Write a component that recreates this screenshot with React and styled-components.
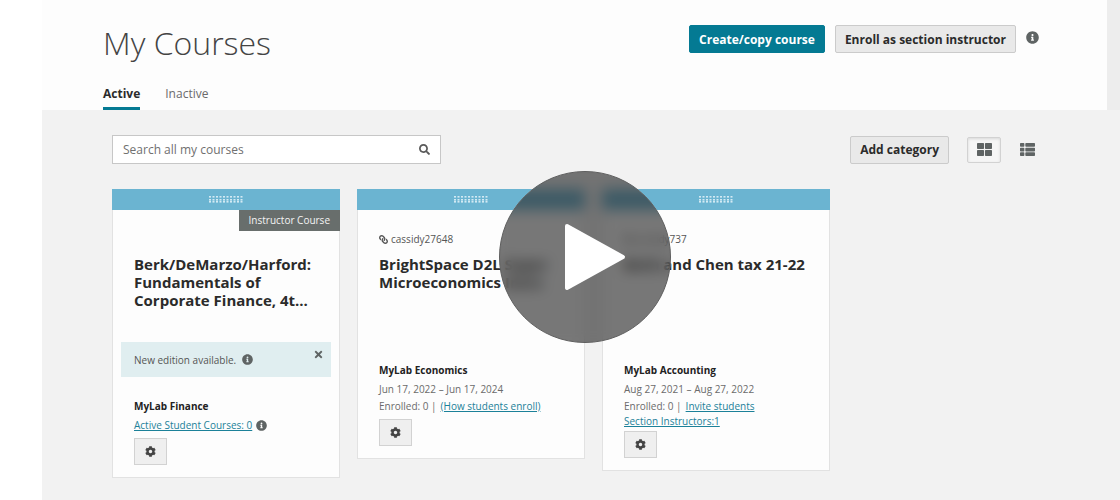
import React from 'react'
import styled, { createGlobalStyle, css } from 'styled-components'
import { FaCog, FaInfoCircle, FaLink, FaSearch, FaThLarge, FaThList, FaTimes } from 'react-icons/fa'

const colors = {
    teal: '#047a93',
    link: '#1c8199',
    bar: '#6bb4d1',
    text: '#2b2b2b',
    muted: '#6b6b6b',
    border: '#d2d2d2',
    page: '#f2f2f2',
    surface: '#fdfdfd'
}

const GlobalStyle = createGlobalStyle`
    * {
        box-sizing: border-box;
    }
    html, body {
        height: 100%;
    }
    #root {
        display: flex;
        height: 100%;
    }
    body {
        margin: 0;
        overflow: hidden;
        background: #fff;
        color: ${colors.text};
        font-family: 'Open Sans', 'Noto Sans', sans-serif;
        font-size: 10px;
    }
    button, input {
        font-family: inherit;
    }
`

const StyledPage = styled.div`
    flex: 1;
    position: relative;
    margin-left: 42px;
    background: ${colors.page};
`

const StyledHeader = styled.header`
    display: flex;
    justify-content: space-between;
    align-items: flex-start;
    margin-right: 13px;
    padding: 18px 68px 0 61px;
    background: ${colors.surface};
    box-shadow: 13px 0 0 #ededed;
`

const StyledTitle = styled.h1`
    margin: 0;
    font-size: 32px;
    font-weight: 300;
    line-height: 50px;
    color: #444;
`

const StyledTabs = styled.nav`
    display: flex;
    gap: 25px;
    margin-top: 16px;
`

const StyledTab = styled.a`
    height: 26px;
    font-size: 12px;
    line-height: 20px;
    text-decoration: none;
    color: ${colors.muted};
    ${({ $active }) => $active && css`
        font-weight: 700;
        color: ${colors.text};
        border-bottom: 3px solid ${colors.teal};
    `}
`

const StyledActions = styled.div`
    display: flex;
    align-items: flex-start;
    gap: 10px;
    padding-top: 7px;
`

const StyledButton = styled.button`
    height: 28px;
    padding: 0 9px;
    border: 1px solid ${({ $primary }) => $primary ? colors.teal : '#cbcbcb'};
    border-radius: 2px;
    background: ${({ $primary }) => $primary ? colors.teal : '#e9e9e9'};
    color: ${({ $primary }) => $primary ? '#fff' : colors.text};
    font-size: 12px;
    font-weight: 700;
    white-space: nowrap;
`

const StyledIconButton = styled.button`
    display: inline-flex;
    align-items: center;
    justify-content: center;
    padding: 0;
    border: 0;
    background: none;
    color: #5f6464;
`

const StyledHelp = styled.div`
    display: flex;
    align-items: center;
    height: 24px;
`

const StyledToolbar = styled.div`
    display: flex;
    align-items: center;
    justify-content: space-between;
    padding: 25px 85px 0 70px;
`

const StyledSearch = styled.label`
    display: flex;
    align-items: center;
    width: 329px;
    height: 29px;
    padding: 0 10px;
    border: 1px solid #c7c7c7;
    background: #fff;
    color: #5a5a5a;
`

const StyledInput = styled.input`
    flex: 1;
    padding: 0;
    border: 0;
    outline: 0;
    background: none;
    font-size: 12px;
    &::placeholder {
        color: #707070;
        opacity: 1;
    }
`

const StyledTools = styled.div`
    display: flex;
    align-items: center;
    gap: 18px;
`

const StyledView = styled(StyledIconButton)`
    width: ${({ $active }) => $active ? 34 : 16}px;
    height: 26px;
    ${({ $active }) => $active && css`
        border: 1px solid ${colors.border};
        border-radius: 2px;
        background: #f6f6f6;
        box-shadow: inset 0 1px 3px rgba(0, 0, 0, .12);
    `}
`

const StyledGrid = styled.main`
    display: grid;
    grid-template-columns: repeat(auto-fill, 228px);
    align-items: start;
    gap: 17px;
    padding: 25px 70px 22px;
`

const StyledCard = styled.article`
    position: relative;
`

const StyledBar = styled.div`
    display: flex;
    align-items: center;
    justify-content: center;
    height: 21px;
    background: ${colors.bar};
`

const StyledTag = styled.span`
    position: absolute;
    top: 21px;
    right: 0;
    padding: 0 10px;
    background: #686e6c;
    color: #f4f4f4;
    line-height: 21px;
`

const StyledBody = styled.div`
    padding: 21px 21px 12px;
    border: 1px solid #e2e2e2;
    border-top: 0;
    background: ${colors.surface};
`

const StyledId = styled.div`
    display: flex;
    align-items: center;
    gap: 3px;
    height: 16px;
    color: #555;
    svg {
        transform: scaleX(-1);
    }
`

const StyledName = styled.h2`
    min-height: 87px;
    margin: 8px 0 0;
    font-size: 15px;
    font-weight: 700;
    line-height: 18px;
    white-space: pre-line;
`

const StyledNotice = styled.div`
    display: flex;
    align-items: center;
    gap: 6px;
    height: 35px;
    margin: 0 -13px 21px;
    padding: 0 7px 0 13px;
    background: #e0eef0;
    color: #555;
`

const StyledClose = styled(StyledIconButton)`
    align-self: flex-start;
    margin: 7px 0 0 auto;
`

const StyledProduct = styled.h3`
    margin: 20px 0 3px;
    font-size: 10px;
    font-weight: 700;
    line-height: 16px;
    color: #222;
`

const StyledMeta = styled.div`
    display: flex;
    align-items: center;
    gap: 4px;
    line-height: ${({ $tight }) => $tight ? 12 : 17}px;
    white-space: nowrap;
    color: ${colors.muted};
`

const StyledLink = styled.a`
    color: ${colors.link};
    text-decoration: underline;
`

const StyledSettings = styled(StyledIconButton)`
    width: 33px;
    height: 27px;
    margin-top: 4px;
    border: 1px solid ${colors.border};
    background: #efefef;
    color: #444;
`

const StyledPlay = styled.button`
    position: absolute;
    top: 171px;
    left: 457px;
    width: 172px;
    height: 172px;
    padding: 0;
    border: 1px solid #5e5e5e;
    border-radius: 50%;
    background: rgba(30, 30, 30, .6);
    backdrop-filter: blur(7px);
`

const courses = [
    {
        name: 'Berk/DeMarzo/Harford: Fundamentals of Corporate Finance, 4t...',
        tag: 'Instructor Course',
        notice: 'New edition available.',
        product: 'MyLab Finance',
        students: 'Active Student Courses: 0'
    },
    {
        id: 'cassidy27648',
        name: 'BrightSpace D2L Super\nMicroeconomics Intro',
        product: 'MyLab Economics',
        dates: 'Jun 17, 2022 – Jun 17, 2024',
        enroll: '(How students enroll)'
    },
    {
        id: 'cassidy737',
        name: 'Beth and Chen tax 21-22',
        product: 'MyLab Accounting',
        dates: 'Aug 27, 2021 – Aug 27, 2022',
        enroll: 'Invite students',
        instructors: 'Section Instructors:1'
    }
]

const Info = ({ size = 11 }) => <StyledIconButton aria-label='More information'>
    <FaInfoCircle size={size} />
</StyledIconButton>

const Grip = () => <svg width='34' height='8' viewBox='0 0 34 8' fill='#d3eaf3'>
    {[0, 3, 5].map(y => Array.from({ length: 10 }, (_, i) => (
        <rect key={`${y}-${i}`} x={i * 3.5} y={y} width='2' height='1.6' />
    )))}
</svg>

const Course = (props) => <StyledCard>
    <StyledBar><Grip /></StyledBar>
    {props.tag && <StyledTag>{props.tag}</StyledTag>}
    <StyledBody>
        <StyledId>{props.id && <><FaLink size={9} />{props.id}</>}</StyledId>
        <StyledName>{props.name}</StyledName>
        {props.notice && <StyledNotice>
            {props.notice}
            <Info />
            <StyledClose aria-label='Dismiss'><FaTimes size={11} /></StyledClose>
        </StyledNotice>}
        <StyledProduct>{props.product}</StyledProduct>
        {props.students && <StyledMeta><StyledLink href='#'>{props.students}</StyledLink><Info /></StyledMeta>}
        {props.dates && <StyledMeta>{props.dates}</StyledMeta>}
        {props.enroll && <StyledMeta>Enrolled: 0 | <StyledLink href='#'>{props.enroll}</StyledLink></StyledMeta>}
        {props.instructors && <StyledMeta $tight><StyledLink href='#'>{props.instructors}</StyledLink></StyledMeta>}
        <StyledSettings aria-label='Course settings'><FaCog size={11} /></StyledSettings>
    </StyledBody>
</StyledCard>

export default () => <>
    <GlobalStyle />
    <StyledPage>
        <StyledHeader>
            <div>
                <StyledTitle>My Courses</StyledTitle>
                <StyledTabs>
                    <StyledTab href='#' $active>Active</StyledTab>
                    <StyledTab href='#'>Inactive</StyledTab>
                </StyledTabs>
            </div>
            <StyledActions>
                <StyledButton $primary>Create/copy course</StyledButton>
                <StyledButton>Enroll as section instructor</StyledButton>
                <StyledHelp><Info size={13} /></StyledHelp>
            </StyledActions>
        </StyledHeader>
        <StyledToolbar>
            <StyledSearch>
                <StyledInput type='text' placeholder='Search all my courses' aria-label='Search all my courses' />
                <FaSearch size={11} />
            </StyledSearch>
            <StyledTools>
                <StyledButton>Add category</StyledButton>
                <StyledView $active aria-label='Grid view'><FaThLarge size={15} /></StyledView>
                <StyledView aria-label='List view'><FaThList size={15} /></StyledView>
            </StyledTools>
        </StyledToolbar>
        <StyledGrid>
            {courses.map(course => <Course key={course.product} {...course} />)}
        </StyledGrid>
        <StyledPlay aria-label='Play video'>
            <svg width='170' height='170' viewBox='1 1 170 170'>
                <path d='M68 55 L124 86 L68 117 Z' fill='#fff' stroke='#fff' strokeWidth='4' strokeLinejoin='round' />
            </svg>
        </StyledPlay>
    </StyledPage>
</>
